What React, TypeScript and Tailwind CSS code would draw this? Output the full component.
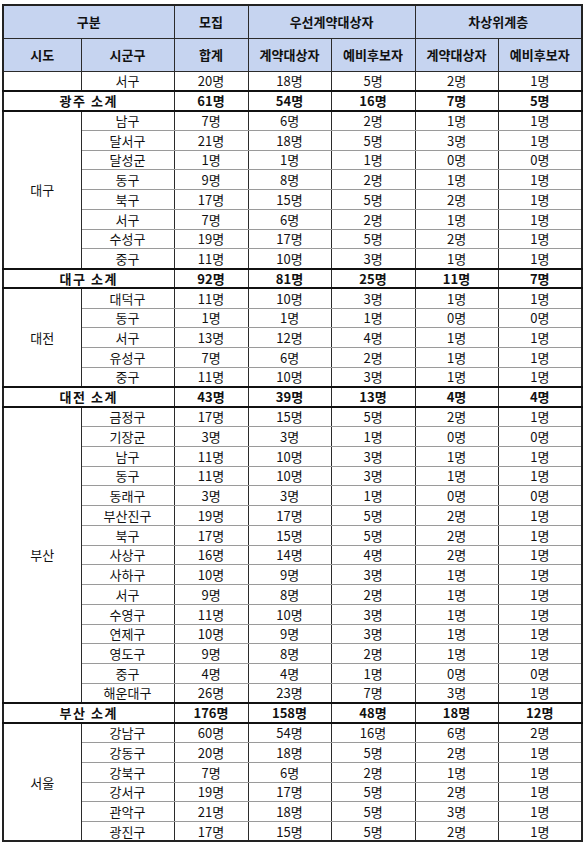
import React from 'react';

type Row = [string, number, number, number, number, number];

type Group = {
  sido: string;
  rows: Row[];
  total: [number, number, number, number, number];
};

const groups: Group[] = [
  {
    sido: '광주',
    rows: [['서구', 20, 18, 5, 2, 1]],
    total: [61, 54, 16, 7, 5],
  },
  {
    sido: '대구',
    rows: [
      ['남구', 7, 6, 2, 1, 1],
      ['달서구', 21, 18, 5, 3, 1],
      ['달성군', 1, 1, 1, 0, 0],
      ['동구', 9, 8, 2, 1, 1],
      ['북구', 17, 15, 5, 2, 1],
      ['서구', 7, 6, 2, 1, 1],
      ['수성구', 19, 17, 5, 2, 1],
      ['중구', 11, 10, 3, 1, 1],
    ],
    total: [92, 81, 25, 11, 7],
  },
  {
    sido: '대전',
    rows: [
      ['대덕구', 11, 10, 3, 1, 1],
      ['동구', 1, 1, 1, 0, 0],
      ['서구', 13, 12, 4, 1, 1],
      ['유성구', 7, 6, 2, 1, 1],
      ['중구', 11, 10, 3, 1, 1],
    ],
    total: [43, 39, 13, 4, 4],
  },
  {
    sido: '부산',
    rows: [
      ['금정구', 17, 15, 5, 2, 1],
      ['기장군', 3, 3, 1, 0, 0],
      ['남구', 11, 10, 3, 1, 1],
      ['동구', 11, 10, 3, 1, 1],
      ['동래구', 3, 3, 1, 0, 0],
      ['부산진구', 19, 17, 5, 2, 1],
      ['북구', 17, 15, 5, 2, 1],
      ['사상구', 16, 14, 4, 2, 1],
      ['사하구', 10, 9, 3, 1, 1],
      ['서구', 9, 8, 2, 1, 1],
      ['수영구', 11, 10, 3, 1, 1],
      ['연제구', 10, 9, 3, 1, 1],
      ['영도구', 9, 8, 2, 1, 1],
      ['중구', 4, 4, 1, 0, 0],
      ['해운대구', 26, 23, 7, 3, 1],
    ],
    total: [176, 158, 48, 18, 12],
  },
  {
    sido: '서울',
    rows: [
      ['강남구', 60, 54, 16, 6, 2],
      ['강동구', 20, 18, 5, 2, 1],
      ['강북구', 7, 6, 2, 1, 1],
      ['강서구', 19, 17, 5, 2, 1],
      ['관악구', 21, 18, 5, 3, 1],
      ['광진구', 17, 15, 5, 2, 1],
    ],
    total: [0, 0, 0, 0, 0],
  },
];

const th = 'border border-[#2b2b2b] bg-[#c6d4f0] font-bold text-center';
const td = 'border-x border-x-[#2b2b2b] border-y border-y-[#9a9a9a] text-center p-0';
const tot = 'border-y-2 border-y-[#111] border-x border-x-[#2b2b2b] text-center font-bold p-0';

export default function App() {
  return (
    <div className="pt-[4px] pl-[2px] bg-white min-h-[847px]">
      <table
        className="border-collapse border-2 border-[#222] text-[13px] leading-none text-[#111] table-fixed"
        style={{ fontFamily: '"Noto Sans CJK KR", "Noto Sans", sans-serif' }}
      >
        <colgroup>
          <col className="w-[78px]" />
          <col className="w-[93px]" />
          <col className="w-[74px]" />
          <col className="w-[83px]" />
          <col className="w-[84px]" />
          <col className="w-[83px]" />
          <col className="w-[84px]" />
        </colgroup>
        <thead>
          <tr className="h-[33px]">
            <th colSpan={2} className={th}>구분</th>
            <th className={th}>모집</th>
            <th colSpan={2} className={th}>우선계약대상자</th>
            <th colSpan={2} className={th}>차상위계층</th>
          </tr>
          <tr className="h-[33px]">
            <th className={th}>시도</th>
            <th className={th}>시군구</th>
            <th className={th}>합계</th>
            <th className={th}>계약대상자</th>
            <th className={th}>예비후보자</th>
            <th className={th}>계약대상자</th>
            <th className={th}>예비후보자</th>
          </tr>
        </thead>
        <tbody>
          {groups.map((g, gi) => (
            <React.Fragment key={g.sido}>
              {g.rows.map((r, ri) => (
                <tr key={r[0]} className="h-[19.75px]">
                  {ri === 0 && (
                    <td rowSpan={g.rows.length} className={td + ' border-y-[#2b2b2b]'}>
                      {gi === 0 ? '' : g.sido}
                    </td>
                  )}
                  <td className={td}>{r[0]}</td>
                  {r.slice(1).map((n, ni) => (
                    <td key={ni} className={td}>{n}명</td>
                  ))}
                </tr>
              ))}
              {g.sido !== '서울' && (
                <tr className="h-[19.75px]">
                  <td colSpan={2} className={tot}>
                    <span className="tracking-[0.12em]">{g.sido} 소계</span>
                  </td>
                  {g.total.map((n, ni) => (
                    <td key={ni} className={tot}>{n}명</td>
                  ))}
                </tr>
              )}
            </React.Fragment>
          ))}
        </tbody>
      </table>
    </div>
  );
}
